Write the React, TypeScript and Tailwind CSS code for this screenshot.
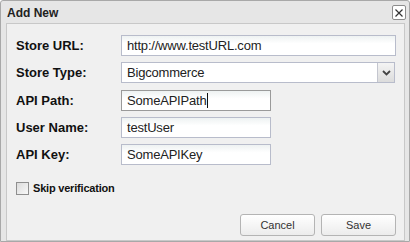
import React from "react";

const font = { fontFamily: '"Liberation Sans", Arial, sans-serif' };

function Label({ children }: { children: React.ReactNode }) {
  return (
    <div className="w-[105px] shrink-0 text-[13px] font-bold text-[#111]">{children}</div>
  );
}

function TextBox({ value, w, focused }: { value: string; w: string; focused?: boolean }) {
  return (
    <div
      className={`${w} h-[21px] border ${focused ? "border-[#9a9a9a]" : "border-[#b8bccb]"} bg-gradient-to-b from-[#eef2f2] to-white to-[40%] flex items-center pl-[5px] text-[13px] tracking-[-0.2px] text-[#222]`}
    >
      <span>{value}</span>
      {focused && <span className="w-px h-[15px] bg-[#111] ml-[1px]" />}
    </div>
  );
}

export default function App() {
  return (
    <div style={font} className="w-[410px] h-[242px] bg-[#e6e6e6] border border-[#a8a8a8] rounded-t-[3px] flex flex-col overflow-hidden">
      <div className="h-[22px] shrink-0 flex items-center justify-between pl-[6px] pr-[3px] pt-[1px]">
        <span className="text-[12px] font-bold text-[#222]">Add New</span>
        <div className="w-[14px] h-[15px] border border-[#8c8c8c] rounded-[2px] bg-white flex items-center justify-center">
          <svg width="10" height="10" viewBox="0 0 10 10">
            <path d="M1.5 1.5 L8.5 8.5 M8.5 1.5 L1.5 8.5" stroke="#333" strokeWidth="1.2" />
          </svg>
        </div>
      </div>
      <div className="flex-1 ml-[5px] mr-[4px] border border-[#c8c8c8] bg-[#f0f0f0] flex flex-col pl-[9px] pr-[8px] pt-[11px] pb-[4px]">
        <div className="flex items-center">
          <Label>Store URL:</Label>
          <TextBox value="http://www.testURL.com" w="w-[275px]" />
        </div>
        <div className="flex items-center mt-[6px]">
          <Label>Store Type:</Label>
          <div className="w-[274px] h-[21px] border border-[#b8bccb] bg-white flex items-center text-[13px] tracking-[-0.2px] text-[#222]">
            <span className="flex-1 pl-[5px]">Bigcommerce</span>
            <div className="w-[17px] h-full border-l border-[#c4c6cf] bg-gradient-to-b from-[#f4f4f4] to-[#dcdcdc] flex items-center justify-center">
              <svg width="9" height="6" viewBox="0 0 9 6">
                <path d="M1 1 L4.5 4.5 L8 1" stroke="#444" strokeWidth="1.8" fill="none" />
              </svg>
            </div>
          </div>
        </div>
        <div className="flex items-center mt-[7px]">
          <Label>API Path:</Label>
          <TextBox value="SomeAPIPath" w="w-[150px]" focused />
        </div>
        <div className="flex items-center mt-[6px]">
          <Label>User Name:</Label>
          <TextBox value="testUser" w="w-[150px]" />
        </div>
        <div className="flex items-center mt-[6px]">
          <Label>API Key:</Label>
          <TextBox value="SomeAPIKey" w="w-[150px]" />
        </div>
        <div className="flex items-center mt-[15px]">
          <div className="w-[13px] h-[13px] border border-[#8f8f8f] bg-gradient-to-br from-[#dcdcdc] to-[#f8f8f8]" />
          <span className="ml-[4px] text-[11px] font-bold tracking-[-0.2px] text-[#111]">Skip verification</span>
        </div>
        <div className="mt-auto flex justify-end gap-[6px]">
          <button className="w-[75px] h-[22px] border border-[#b4b4b4] rounded-[3px] bg-gradient-to-b from-white to-[#ececec] text-[11px] text-[#333]">Cancel</button>
          <button className="w-[75px] h-[22px] border border-[#b4b4b4] rounded-[3px] bg-gradient-to-b from-white to-[#ececec] text-[11px] text-[#333]">Save</button>
        </div>
      </div>
    </div>
  );
}
